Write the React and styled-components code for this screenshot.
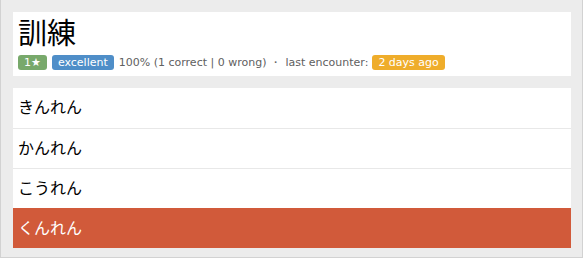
import styled, { createGlobalStyle } from "styled-components";

const GlobalStyle = createGlobalStyle`
html, body {
margin: 0;
padding: 0;
background: #ffffff;
}
`

const options = [
    { text: "きんれん", wrong: false },
    { text: "かんれん", wrong: false },
    { text: "こうれん", wrong: false },
    { text: "くんれん", wrong: true },
]

export default function App() {
    return (
        <>
            <GlobalStyle />
            <Frame>
                <Header>
                    <Kanji>訓練</Kanji>
                    <Stats>
                        <Badge color="#78a96b">1★</Badge>
                        <Badge color="#4f8ec8">excellent</Badge>
                        <span>100% (1 correct | 0 wrong)</span>
                        <Dot>・</Dot>
                        <span>last encounter:</span>
                        <Badge color="#efad2b">2 days ago</Badge>
                    </Stats>
                </Header>
                <List>
                    {options.map((o) => (
                        <Row key={o.text} $wrong={o.wrong}>{o.text}</Row>
                    ))}
                </List>
            </Frame>
        </>
    )
}

const Frame = styled.div`
width: 583px;
height: 258px;
box-sizing: border-box;
background: #ececec;
border: 1px solid #d2d2d2;
border-top: none;
padding: 12px 11px 9px 12px;
display: flex;
flex-direction: column;
gap: 12px;
`

const Header = styled.div`
background: #ffffff;
height: 64px;
box-sizing: border-box;
padding: 0 5px;
display: flex;
flex-direction: column;
`

const Kanji = styled.div`
font-family: "Noto Sans CJK JP", sans-serif;
font-size: 29px;
line-height: 38px;
height: 43px;
color: #000000;
`

const Stats = styled.div`
display: flex;
align-items: center;
gap: 4px;
font-family: "DejaVu Sans", Verdana, sans-serif;
font-size: 11px;
color: #606060;
`

const Badge = styled.span`
background: ${(p) => p.color};
color: #ffffff;
border-radius: 3px;
padding: 0 6px;
height: 15px;
line-height: 15px;
display: inline-block;
margin-right: 1px;
`

const Dot = styled.span`
margin: 0;
`

const List = styled.div`
background: #ffffff;
display: flex;
flex-direction: column;
`

const Row = styled.div`
height: 40px;
box-sizing: border-box;
padding: 0 5px 4px;
display: flex;
align-items: center;
font-family: "Noto Sans CJK JP", sans-serif;
font-size: 16px;
color: ${(p) => (p.$wrong ? "#ffffff" : "#000000")};
background: ${(p) => (p.$wrong ? "#d15a3a" : "#ffffff")};
border-top: 1px solid ${(p) => (p.$wrong ? "#d15a3a" : "#e8e8e8")};
&:first-child {
border-top: none;
}
`
